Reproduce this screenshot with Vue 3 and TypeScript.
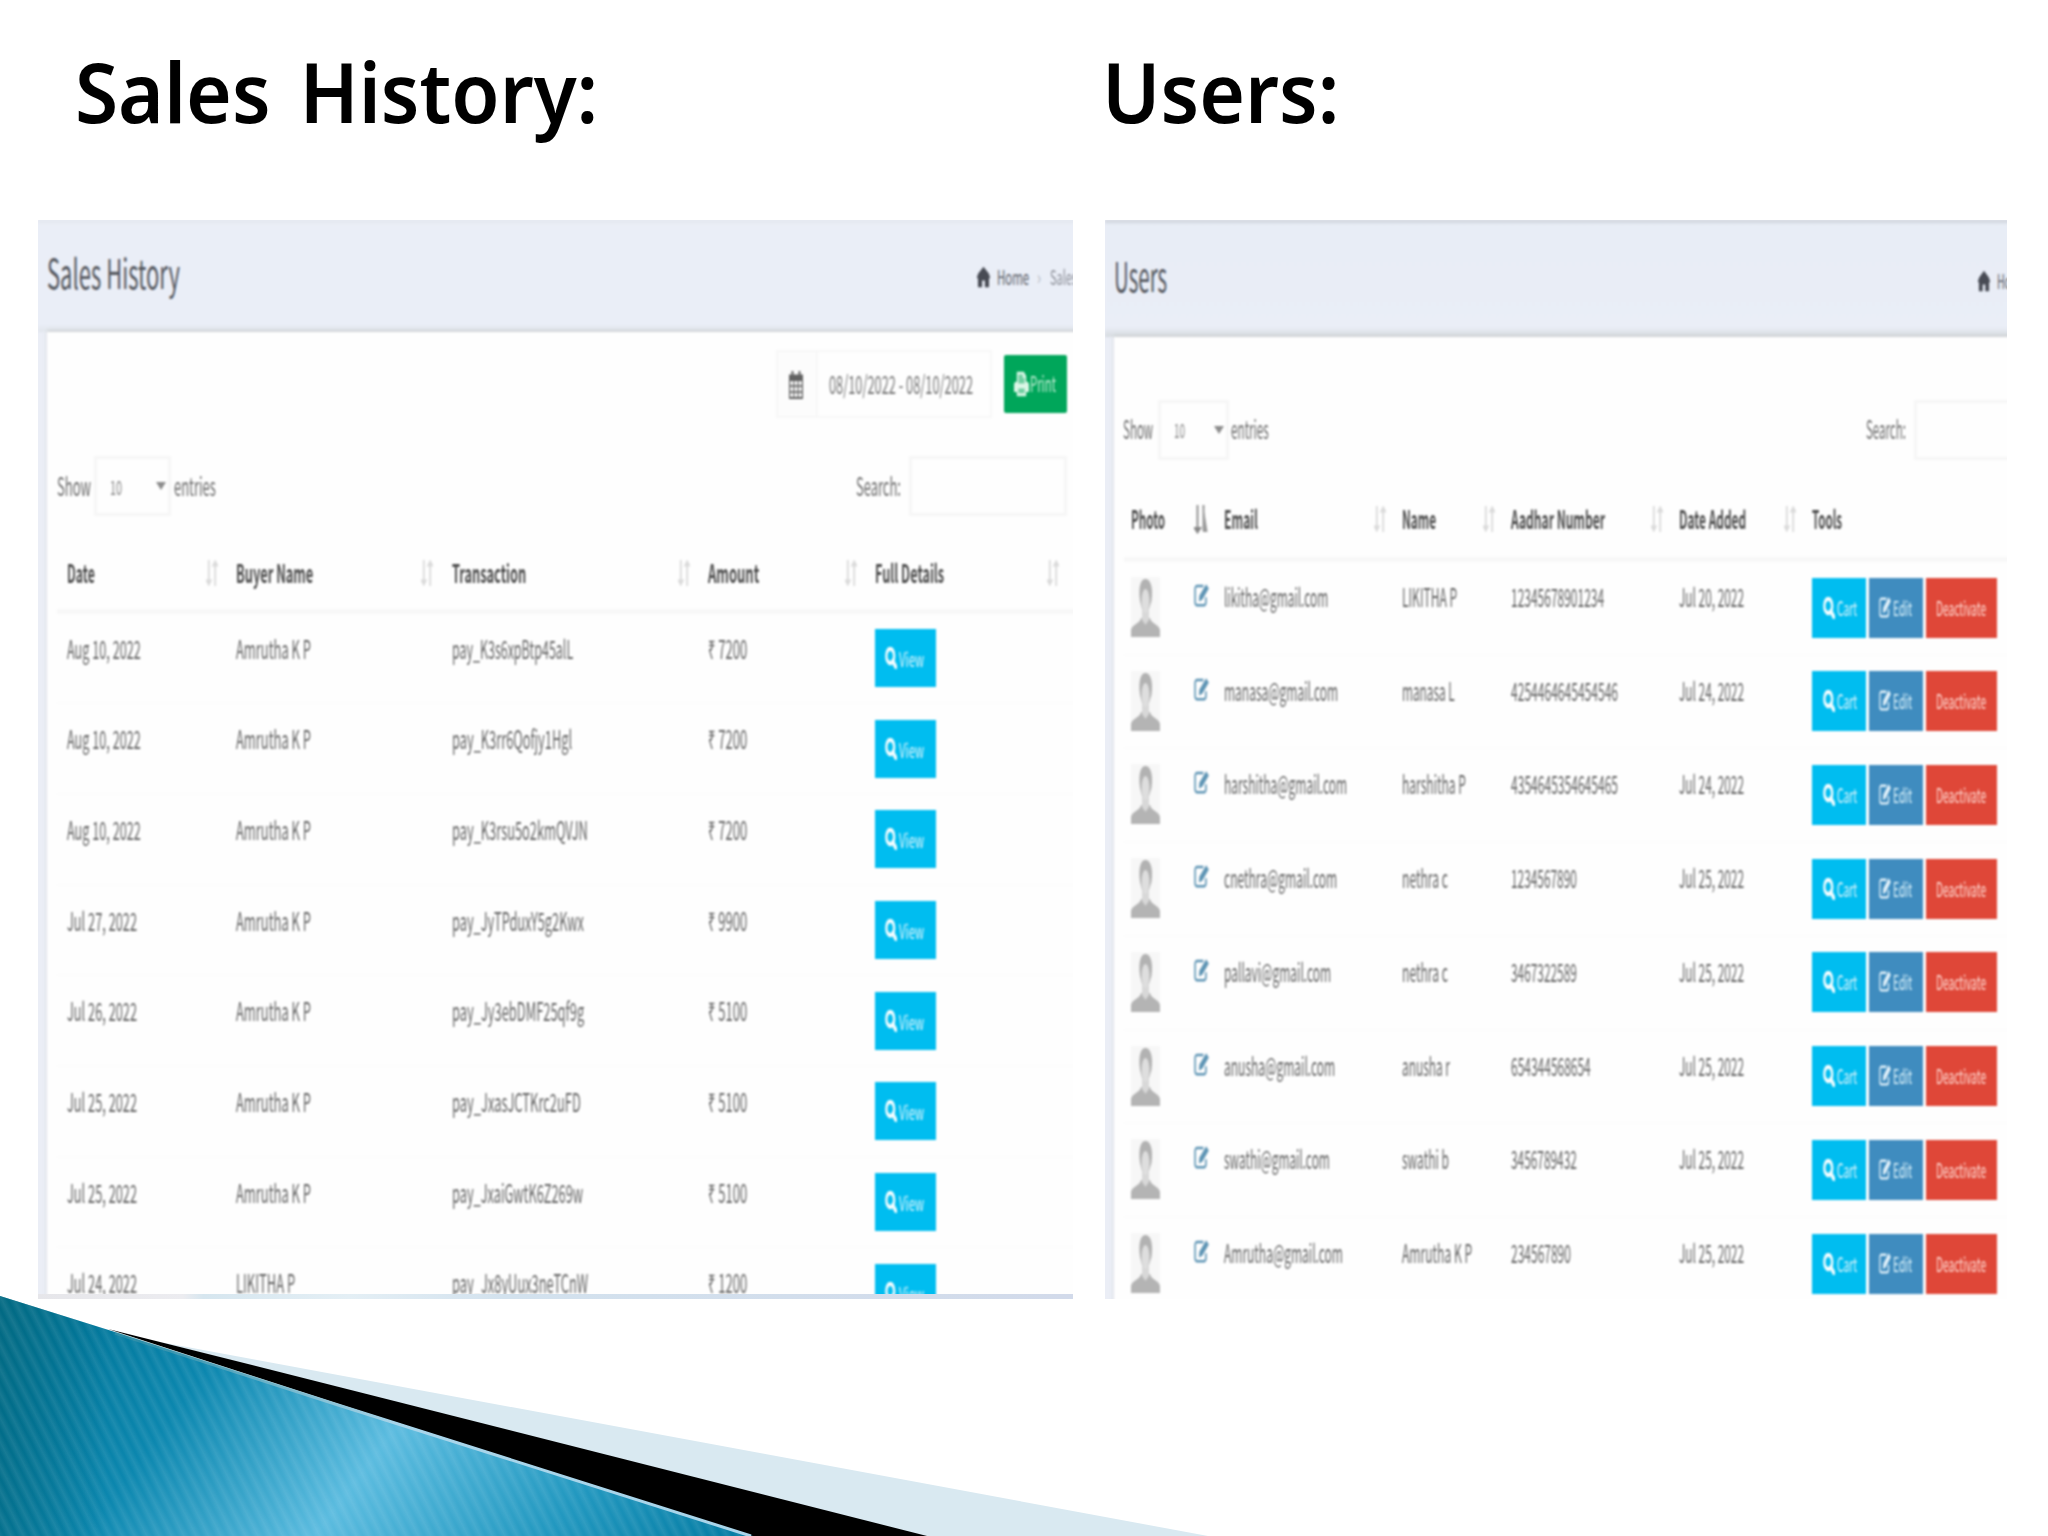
<script setup lang="ts">
import type { Directive } from 'vue'

interface Sale { date: string; dw: number; buyer: string; bw: number; txn: string; tw: number; amount: string }
interface User { email: string; ew: number; name: string; nw: number; aadhar: string; aw: number; date: string }
interface Head { label: string; w: number; sort: '' | 'both' | 'active' }

// Squeezes a line of text horizontally to the given width in pixels.
const fit = (el: HTMLElement, width: number) => {
  el.style.transform = 'none'
  el.style.marginRight = '0'
  const natural = el.offsetWidth
  if (!natural) return
  el.style.transform = `scaleX(${width / natural})`
  el.style.marginRight = `${width - natural}px`
}
const vFit: Directive<HTMLElement, number> = {
  mounted: (el, { value }) => fit(el, value),
  updated: (el, { value }) => fit(el, value),
}

const saleHeads: Head[] = [
  { label: 'Date', w: 28, sort: 'both' },
  { label: 'Buyer Name', w: 77, sort: 'both' },
  { label: 'Transaction', w: 74, sort: 'both' },
  { label: 'Amount', w: 51, sort: 'both' },
  { label: 'Full Details', w: 69, sort: 'both' },
]
const sale = (date: string, dw: number, txn: string, tw: number, amount: string, buyer = 'Amrutha K P', bw = 75): Sale =>
  ({ date, dw, buyer, bw, txn, tw, amount })
const sales: Sale[] = [
  sale('Aug 10, 2022', 74, 'pay_K3s6xpBtp45alL', 121, '₹ 7200'),
  sale('Aug 10, 2022', 74, 'pay_K3rr6Qofjy1Hgl', 120, '₹ 7200'),
  sale('Aug 10, 2022', 74, 'pay_K3rsu5o2kmQVJN', 136, '₹ 7200'),
  sale('Jul 27, 2022', 70, 'pay_JyTPduxY5g2Kwx', 132, '₹ 9900'),
  sale('Jul 26, 2022', 70, 'pay_Jy3ebDMF25qf9g', 132, '₹ 5100'),
  sale('Jul 25, 2022', 70, 'pay_JxasJCTKrc2uFD', 129, '₹ 5100'),
  sale('Jul 25, 2022', 70, 'pay_JxaiGwtK6Z269w', 131, '₹ 5100'),
  sale('Jul 24, 2022', 70, 'pay_Jx8yUux3neTCnW', 136, '₹ 1200', 'LIKITHA P', 59),
]

const userHeads: Head[] = [
  { label: 'Photo', w: 34, sort: 'active' },
  { label: 'Email', w: 34, sort: 'both' },
  { label: 'Name', w: 34, sort: 'both' },
  { label: 'Aadhar Number', w: 94, sort: 'both' },
  { label: 'Date Added', w: 67, sort: 'both' },
  { label: 'Tools', w: 30, sort: '' },
]
const users: User[] = [
  { email: 'likitha@gmail.com', ew: 104, name: 'LIKITHA P', nw: 55, aadhar: '12345678901234', aw: 93, date: 'Jul 20, 2022' },
  { email: 'manasa@gmail.com', ew: 114, name: 'manasa L', nw: 53, aadhar: '4254464645454546', aw: 107, date: 'Jul 24, 2022' },
  { email: 'harshitha@gmail.com', ew: 123, name: 'harshitha P', nw: 64, aadhar: '4354645354645465', aw: 107, date: 'Jul 24, 2022' },
  { email: 'cnethra@gmail.com', ew: 113, name: 'nethra c', nw: 46, aadhar: '1234567890', aw: 66, date: 'Jul 25, 2022' },
  { email: 'pallavi@gmail.com', ew: 107, name: 'nethra c', nw: 46, aadhar: '3467322589', aw: 66, date: 'Jul 25, 2022' },
  { email: 'anusha@gmail.com', ew: 111, name: 'anusha r', nw: 48, aadhar: '654344568654', aw: 80, date: 'Jul 25, 2022' },
  { email: 'swathi@gmail.com', ew: 106, name: 'swathi b', nw: 47, aadhar: '3456789432', aw: 66, date: 'Jul 25, 2022' },
  { email: 'Amrutha@gmail.com', ew: 119, name: 'Amrutha K P', nw: 70, aadhar: '234567890', aw: 60, date: 'Jul 25, 2022' },
]
</script>

<template>
  <div class="slide">
    <svg width="0" height="0" class="defs">
      <symbol id="i-search" viewBox="0 0 16 16" preserveAspectRatio="none">
        <circle cx="7" cy="6.5" r="5.2" fill="none" stroke="currentColor" stroke-width="3.2" />
        <path d="M10.500 10.500l4 4" stroke="currentColor" stroke-width="3.800" stroke-linecap="round" />
      </symbol>
      <symbol id="i-edit" viewBox="0 0 16 16" preserveAspectRatio="none">
        <path d="M10 2H3.200A2 2 0 0 0 1.200 4v8.800a2 2 0 0 0 2 2h7.500a2 2 0 0 0 2-2V9.500" fill="none" stroke="currentColor" stroke-width="1.700" />
        <path d="M13 .8l2.800 2.800-7 7.600-3.600 1.200.6-4z" fill="currentColor" />
      </symbol>
      <symbol id="i-home" viewBox="0 0 16 16" preserveAspectRatio="none">
        <path d="M8 .5L14.500 5.500 16 8v1l-1.200-.3V15.500H9.700V10.500H6.300v5H1.200V8.700L0 9V8l1.500-2.500z" fill="currentColor" />
      </symbol>
      <symbol id="i-calendar" viewBox="0 0 14 16" preserveAspectRatio="none">
        <path d="M0 2.500h2.500V.5h2v2h5v-2h2v2H14V16H0z" fill="currentColor" />
        <path d="M1.300 6h3v2.400h-3zM5.500 6h3v2.400h-3zM9.700 6h3v2.400h-3zM1.300 9.300h3v2.400h-3zM5.500 9.300h3v2.400h-3zM9.700 9.300h3v2.400h-3zM1.300 12.600h3v2.300h-3zM5.500 12.600h3v2.300h-3zM9.700 12.600h3v2.300h-3z" fill="#fafafa" />
      </symbol>
      <symbol id="i-print" viewBox="0 0 16 16" preserveAspectRatio="none">
        <path d="M3 7V1h7.500L13 3.500V7h.8A2.200 2.200 0 0 1 16 9.200V13h-3v2.500H3V13H0V9.200A2.200 2.200 0 0 1 2.200 7z" fill="currentColor" />
        <path d="M4.700 2.700h4.600v2h2V8H4.700zM4.700 11h6.600v2.800H4.700z" fill="#00a65a" opacity=".5" />
      </symbol>
      <symbol id="i-sort" viewBox="0 0 12 28" preserveAspectRatio="none">
        <path d="M2.800 1v22M.8 21.500l2 4 2-4zM9.200 5v22M7.200 6.500l2-4 2 4z" fill="#dadada" stroke="#dadada" stroke-width="1.800" />
      </symbol>
      <symbol id="i-sorted" viewBox="0 0 14 30" preserveAspectRatio="none">
        <path d="M3.500 1v25M.6 24l2.900 4.500L6.400 24zM9.500 1v26" fill="#888" stroke="#888" stroke-width="1.800" />
        <path d="M9 3l1.800 8 2.800 17H9z" fill="#999" />
      </symbol>
      <symbol id="i-avatar" viewBox="0 0 29 60" preserveAspectRatio="none">
        <rect width="29" height="60" fill="#f7f7f7" />
        <path d="M0 60V53C1 47 9 47 10 41h9c1 6 9 6 10 12v7z" fill="#b4b4b4" />
        <path d="M11 32h7v11l-3.500 5L11 43z" fill="#d8d8d8" />
        <path d="M9 24C7 9 10 2 14.500 2s8 7 6 22l-2.500 8h-7z" fill="#b2b2b2" />
        <ellipse cx="14.500" cy="24" rx="4" ry="12" fill="#dedede" />
      </symbol>
    </svg>

    <header class="titles">
      <h1 class="title-sales"><span v-fit="523" class="t">Sales History:</span></h1>
      <h1><span v-fit="237" class="t">Users:</span></h1>
    </header>

    <main class="shots">
      <section class="shot sales">
        <div class="soft">
          <div class="top">
            <h2><span v-fit="133" class="t">Sales History</span></h2>
            <nav class="crumbs">
              <svg><use href="#i-home" /></svg>
              <span v-fit="32" class="t home">Home</span>
              <span v-fit="4" class="t sep">›</span>
              <span v-fit="66" class="t here">Sales History</span>
            </nav>
          </div>
          <div class="card">
            <div class="range-row">
              <div class="range">
                <div class="cal"><svg><use href="#i-calendar" /></svg></div>
                <div class="dates"><span v-fit="144" class="t">08/10/2022 - 08/10/2022</span></div>
              </div>
              <button class="print"><svg><use href="#i-print" /></svg><span v-fit="26" class="t">Print</span></button>
            </div>
            <div class="controls">
              <span v-fit="34" class="t">Show</span>
              <div class="select"><span v-fit="12" class="t">10</span><i class="caret" /></div>
              <span v-fit="42" class="t">entries</span>
              <span v-fit="45" class="t search">Search:</span>
              <div class="field" />
            </div>
            <div class="grid head">
              <div v-for="h in saleHeads" :key="h.label" class="th">
                <span v-fit="h.w" class="t">{{ h.label }}</span>
                <svg class="sort"><use href="#i-sort" /></svg>
              </div>
            </div>
            <div v-for="(s, i) in sales" :key="i" class="grid row">
              <div><span v-fit="s.dw" class="t">{{ s.date }}</span></div>
              <div><span v-fit="s.bw" class="t">{{ s.buyer }}</span></div>
              <div><span v-fit="s.tw" class="t">{{ s.txn }}</span></div>
              <div><span v-fit="39" class="t">{{ s.amount }}</span></div>
              <div class="tools">
                <button class="btn info view"><svg><use href="#i-search" /></svg><span v-fit="25" class="t">View</span></button>
              </div>
            </div>
          </div>
        </div>
        <div class="edge" />
      </section>

      <section class="shot users">
        <div class="soft">
          <div class="top">
            <h2><span v-fit="53" class="t">Users</span></h2>
            <nav class="crumbs">
              <svg><use href="#i-home" /></svg>
              <span v-fit="30" class="t home">Home</span>
            </nav>
          </div>
          <div class="card">
            <div class="controls">
              <span v-fit="30" class="t">Show</span>
              <div class="select"><span v-fit="11" class="t">10</span><i class="caret" /></div>
              <span v-fit="38" class="t">entries</span>
              <span v-fit="40" class="t search">Search:</span>
              <div class="field" />
            </div>
            <div class="grid head">
              <div v-for="h in userHeads" :key="h.label" class="th">
                <span v-fit="h.w" class="t">{{ h.label }}</span>
                <svg v-if="h.sort" :class="['sort', h.sort]"><use :href="h.sort === 'active' ? '#i-sorted' : '#i-sort'" /></svg>
              </div>
            </div>
            <div v-for="u in users" :key="u.email" class="grid row">
              <div class="photo">
                <svg class="avatar"><use href="#i-avatar" /></svg>
                <svg class="pencil"><use href="#i-edit" /></svg>
              </div>
              <div><span v-fit="u.ew" class="t">{{ u.email }}</span></div>
              <div><span v-fit="u.nw" class="t">{{ u.name }}</span></div>
              <div><span v-fit="u.aw" class="t">{{ u.aadhar }}</span></div>
              <div><span v-fit="65" class="t">{{ u.date }}</span></div>
              <div class="tools">
                <button class="btn info cart"><svg><use href="#i-search" /></svg><span v-fit="20" class="t">Cart</span></button>
                <button class="btn primary"><svg><use href="#i-edit" /></svg><span v-fit="19" class="t">Edit</span></button>
                <button class="btn danger"><span v-fit="50" class="t">Deactivate</span></button>
              </div>
            </div>
          </div>
        </div>
      </section>
    </main>

    <svg class="swoosh" viewBox="0 1290 1250 246" width="1250" height="246">
      <defs>
        <linearGradient id="sea" gradientUnits="userSpaceOnUse" x1="0" y1="1296" x2="597" y2="1744">
          <stop offset="0" stop-color="#006f8c" />
          <stop offset=".12" stop-color="#00779b" />
          <stop offset=".28" stop-color="#0a86ae" />
          <stop offset=".53" stop-color="#5abbdf" />
          <stop offset=".78" stop-color="#2097bf" />
          <stop offset="1" stop-color="#0079a0" />
        </linearGradient>
        <linearGradient id="shade" x1="0" x2="1" y1="0" y2="0">
          <stop offset="0" stop-color="#006277" stop-opacity=".5" />
          <stop offset=".14" stop-color="#006277" stop-opacity="0" />
        </linearGradient>
        <linearGradient id="rim" gradientUnits="userSpaceOnUse" x1="110" y1="1331" x2="400" y2="1423">
          <stop offset="0" stop-color="#5f9fa8" stop-opacity=".3" />
          <stop offset="1" stop-color="#a9d5ea" />
        </linearGradient>
        <linearGradient id="line" x1="0" x2="1" y1="0" y2="0">
          <stop offset="0" stop-color="#fff" stop-opacity="0" />
          <stop offset=".5" stop-color="#fff" stop-opacity=".09" />
          <stop offset="1" stop-color="#fff" stop-opacity="0" />
        </linearGradient>
        <pattern id="stripes" width="11" height="12" patternUnits="userSpaceOnUse" patternTransform="rotate(-27)">
          <rect width="11" height="12" fill="url(#line)" />
        </pattern>
      </defs>
      <path d="M160 1342L1208 1536H900z" fill="#d9e9f1" />
      <path d="M108 1329L250 1364.500 927 1536H745z" fill="#000" />
      <path d="M0 1296L115 1332 335 1403 753 1536H0z" fill="url(#sea)" />
      <path d="M0 1296L115 1332 335 1403 753 1536H0z" fill="url(#shade)" />
      <path d="M0 1296L115 1332 335 1403 753 1536H0z" fill="url(#stripes)" />
      <path d="M115 1333L335 1404 751 1536" fill="none" stroke="url(#rim)" stroke-width="3" />
    </svg>
  </div>
</template>

<style>
html, body { margin: 0; background: #fff; overflow: hidden; }
</style>

<style scoped>
.slide {
  position: relative;
  width: 2048px;
  height: 1536px;
  overflow: hidden;
  background: #fff;
  font-family: 'Noto Sans CJK SC', 'Noto Sans', sans-serif;
}
.defs { position: absolute; }
.t { display: inline-block; white-space: nowrap; transform-origin: 0 50%; flex: none; }
h1, h2 { margin: 0; font-weight: 400; }
button { border: 0; padding: 0; font: inherit; color: #fff; }

.titles { display: flex; height: 220px; padding-left: 75px; box-sizing: border-box; }
.titles h1 {
  padding-top: 41px;
  font: 600 83px/100px 'Noto Sans', 'Open Sans', sans-serif;
  word-spacing: 9px;
  color: #000;
}
.title-sales { width: 1027px; }

.shots { display: flex; gap: 32px; padding-left: 38px; }
.shot { position: relative; height: 1079px; overflow: hidden; background: #ebeef6; }
.shot.sales { width: 1035px; }
.shot.users { width: 902px; }
.soft { filter: blur(.9px); display: flex; flex-direction: column; height: 1090px; width: 1060px; }
.top {
  flex: none;
  display: flex;
  box-sizing: border-box;
  background: linear-gradient(#e3e7ee, #eaeef7 5px, #eaeef7 calc(100% - 8px), #e2e6ec);
}
.sales .top { height: 112px; padding: 29px 0 0 9px; }
.users .top { height: 117px; padding: 32px 0 0 9px; background: linear-gradient(#cdd1d8, #e8edf6 5px, #eaeef7 calc(100% - 10px), #d6dbdf); }
h2 { font-size: 41px; line-height: 44px; color: #55585f; }
.crumbs { display: flex; font-size: 20px; line-height: 26px; color: #5c5f68; }
.sales .crumbs { padding: 15px 0 0 797px; }
.users .crumbs { padding: 16px 0 0 811px; }
.crumbs svg { width: 13px; height: 22px; margin-top: 2px; color: #484b54; }
.crumbs .home { margin-left: 7px; }
.users .crumbs svg { width: 12px; }
.sep { margin-left: 8px; color: #b5b8c0; }
.here { margin-left: 9px; color: #8b8e97; }

.card {
  flex: 1;
  margin-left: 9px;
  background: #fefefe;
  box-shadow: 0 -2px 3px #cfd3d6;
  color: #5a5a5a;
  font-size: 25px;
  line-height: 26px;
}

.range-row { display: flex; height: 94px; padding: 18px 0 0 729px; box-sizing: border-box; }
.range { display: flex; width: 216px; height: 68px; border: 2px solid #f7f7f7; box-sizing: border-box; }
.cal { width: 40px; border-right: 2px solid #f7f7f7; box-sizing: border-box; background: #fcfcfc; }
.cal svg { width: 14px; height: 29px; margin: 18px 0 0 11px; color: #626262; display: block; }
.dates { padding: 18px 0 0 11px; color: #777; }
.print {
  display: flex; width: 63px; height: 58px; margin: 5px 0 0 12px; background: #00a65a; border-radius: 2px; font-size: 21px;
}
.print svg { width: 15px; height: 27px; margin: 15px 1px 0 10px; color: #dcf7e7; }
.print .t { margin-top: 15px; color: #c4eed6; }

.controls { display: flex; align-items: center; color: #6a6a6a; }
.sales .controls { height: 120px; padding-left: 10px; }
.users .controls { height: 188px; padding-left: 9px; }
.controls > .t { margin-top: -3px; }
.users .controls > .t { margin-top: -7px; }
.users .select, .users .field { margin-top: -3px; }
.select, .field { box-sizing: border-box; height: 60px; border: 3px solid #f6f6f6; }
.select { display: flex; align-items: center; font-size: 19px; }
.select .t { margin-left: 13px; color: #888; padding-top: 2px; }
.sales .select { width: 77px; margin: 0 3px; }
.users .select { width: 71px; margin-left: 5px; margin-right: 2px; }
.users .select .t { padding-top: 0; }
.caret { margin-left: auto; border: 5px solid transparent; border-top: 8px solid #8c8c8c; border-bottom: 0; }
.sales .caret { margin-right: 2px; }
.users .caret { margin-right: 2px; }
.search { margin-left: 640px; }
.users .search { margin-left: 597px; }
.field { width: 158px; margin-left: 8px; }

.grid { display: grid; box-sizing: border-box; }
.sales .grid { grid-template-columns: 169px 215.5px 256.5px 167px 202px; margin-left: 10px; padding-left: 10px; }
.users .grid { grid-template-columns: 93px 178px 109px 168px 133px 210px; margin-left: 10px; padding-left: 7px; }
.head { border-bottom: 5px solid #f8f8f8; font-weight: 700; color: #4c4c4c; }
.sales .head { height: 67.500px; padding-top: 5px; }
.users .head { height: 38px; margin-top: -1px; }
.th { display: flex; align-items: center; height: 42px; }
.sort { width: 12px; height: 28px; margin: 1px 18.500px 0 auto; }
.users .th { margin-top: -31px; height: 50px; }
.users .sort { margin-right: 16px; }
.sort.active { width: 14px; height: 30px; }
.row { height: 90.700px; color: #646464; border-bottom: 2px solid #fcfcfc; }
.users .row { height: 93.720px; }
.row > div { padding-top: 21px; }
.row > .tools { display: flex; gap: 3px; padding-top: 15.500px; }
.row > .photo { display: flex; padding-top: 15px; }
.avatar { width: 29px; height: 60px; }
.pencil { width: 15px; height: 24px; margin: 6px 0 0 34px; color: #5d94b4; }

.btn { display: flex; height: 60px; font-size: 20px; line-height: 26px; color: #e0f5fc; box-sizing: border-box; }
.btn svg { width: 12px; height: 22px; margin-top: 19px; color: #f4fdff; }
.btn .t { margin-top: 17px; }
.view { width: 61px; height: 58px; padding-left: 10px; }
.view svg { margin-top: 18px; }
.view .t { margin-left: 2px; }
.info { background: #00bdf0; }
.primary { background: #3f8cbf; width: 54px; padding-left: 10px; }
.primary svg { color: #e2f1fa; margin-top: 18px; }
.primary .t { margin-left: 2px; }
.danger { background: #df4738; width: 71px; padding-left: 10px; color: #ffdcd4; }
.cart { width: 54px; padding-left: 11px; }
.cart .t { margin-left: 2px; }

.edge {
  position: absolute;
  left: 0;
  right: 0;
  bottom: 0;
  height: 5px;
  background: linear-gradient(90deg, #e6e6ea 0, #ececf0 14%, #d6e6ef 16%, #e4eff5 30%, #d3e2ee 45%, #d2daea 100%);
}
.swoosh { position: absolute; left: 0; bottom: 0; display: block; }
</style>
